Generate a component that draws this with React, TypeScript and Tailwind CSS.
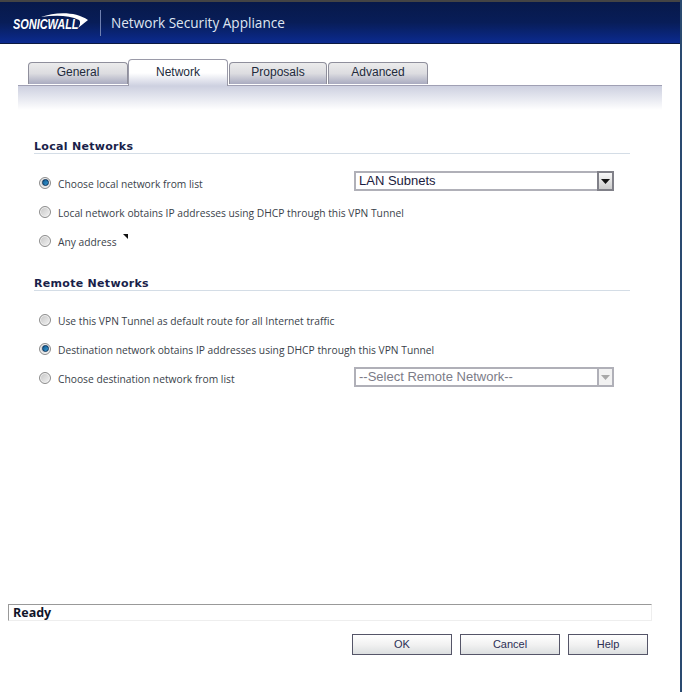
import React from 'react';

const sans = 'font-["Liberation_Sans",Arial,sans-serif]';
const tahoma = 'font-["Open_Sans",sans-serif]';

function Tab({ label, active, width }: { label: string; active?: boolean; width: string }) {
  if (active) {
    return (
      <div className={`${width} h-[27px] -mb-px z-10 rounded-t-[4px] border border-b-0 border-[#9a9aa8] bg-gradient-to-b from-white via-white to-[#cdd0e0] flex items-center justify-center pb-[2px] text-[12px] text-[#222a3c] ${sans}`}>
        {label}
      </div>
    );
  }
  return (
    <div className={`${width} h-[22px] mb-px rounded-t-[4px] border border-b-0 border-[#8f8f9c] bg-gradient-to-b from-[#ececec] via-[#dcdce0] to-[#a9abc0] flex items-center justify-center pb-[3px] text-[12px] text-[#222a3c] ${sans}`}>
      {label}
    </div>
  );
}

function Radio({ checked }: { checked?: boolean }) {
  return (
    <span className="w-[12px] h-[12px] -mt-[2px] shrink-0 rounded-full border border-[#8c8c8c] bg-gradient-to-br from-[#c4c4c4] to-[#f4f4f4] shadow-[inset_0_0_0_1px_#f2f2f2] flex items-center justify-center">
      {checked && <span className="w-[7px] h-[7px] rounded-full border border-[#06305a] bg-gradient-to-br from-[#0e5a94] to-[#3a9ad0]" />}
    </span>
  );
}

function Row({ label, checked, mark }: { label: string; checked?: boolean; mark?: boolean }) {
  return (
    <div className="h-[29px] flex items-center pl-[5px]">
      <Radio checked={checked} />
      <span className={`ml-[7px] mt-[2px] text-[10.25px] text-[#3a3f4a] ${tahoma}`}>{label}</span>
      {mark && (
        <svg width="6" height="6" viewBox="0 0 6 6" className="ml-[6px] -mt-[9px]">
          <path d="M0 0H5V5Z" fill="#111" />
        </svg>
      )}
    </div>
  );
}

function Heading({ children }: { children: string }) {
  return (
    <div className={`h-[17px] pt-[3px] border-b border-[#d4dde6] text-[11px] font-bold tracking-[0.3px] text-[#1a1f4a] leading-[14px] font-["DejaVu_Sans",sans-serif]`}>
      {children}
    </div>
  );
}

function DropBox({ label, disabled }: { label: string; disabled?: boolean }) {
  return (
    <div className={`absolute left-[320px] w-[260px] h-[20px] border-2 border-[#b0b0b8] bg-white flex items-center justify-between pl-[3px] text-[13px] ${sans} ${disabled ? 'top-[3px] text-[#7c7c88]' : 'top-[2px] text-[#1c1c40]'}`}>
      <span>{label}</span>
      <span className={`w-[17px] h-[20px] -mr-[2px] flex items-center justify-center border-2 ${disabled ? 'bg-[#f2f2f2] border-[#b0b0b8]' : 'bg-gradient-to-b from-[#f8f8f8] to-[#cccccc] border-[#808088]'}`}>
        <svg width="9" height="5" viewBox="0 0 9 5">
          <path d="M0 0H9L4.5 5Z" fill={disabled ? '#a8a8a8' : '#111'} />
        </svg>
      </span>
    </div>
  );
}

function Btn({ label, width }: { label: string; width: string }) {
  return (
    <div className={`${width} h-[21px] border border-[#555568] bg-gradient-to-b from-white via-[#f2f2f2] to-[#dcdfe0] flex items-center justify-center text-[11px] text-[#2c2f55] ${sans}`}>
      {label}
    </div>
  );
}

export default function App() {
  return (
    <div className="w-[682px] h-[692px] bg-white flex flex-col border-r-2 border-[#2a4a70] overflow-hidden">
      {/* Header */}
      <div className="h-[44px] shrink-0 border-t-2 border-b border-t-[#444] border-b-[#0c1a40] bg-gradient-to-b from-[#07194a] via-[#081d58] to-[#0b2a90] flex items-center">
        <div className="relative ml-[13px] w-[75px] h-[30px]">
          <span className={`absolute left-0 top-[6px] text-[14px] font-bold italic text-white scale-x-[0.78] origin-left whitespace-nowrap ${sans}`}>SONICWALL</span>
          <svg width="76" height="30" viewBox="0 0 76 30" className="absolute left-0 top-0">
            <path d="M28 9C42 4 62 3 75 12L65 20C67 17 68 14 66 12C56 7 42 7 28 9Z" fill="#fff" />
          </svg>
        </div>
        <div className="ml-[12px] w-px h-[26px] bg-[#6f80b0]" />
        <span className={`ml-[10px] pt-[2px] text-[13.6px] text-[#dfe5f2] ${tahoma}`}>Network Security Appliance</span>
      </div>

      {/* Tabs */}
      <div className="mt-[14px] h-[27px] pl-[28px] flex items-end">
        <Tab label="General" width="w-[100px]" />
        <Tab label="Network" active width="w-[100px]" />
        <Tab label="Proposals" width="w-[98px] ml-px" />
        <Tab label="Advanced" width="w-[100px] ml-px" />
      </div>
      <div className="ml-[18px] w-[644px] h-[25px] border-t border-[#a0a0b4] bg-gradient-to-b from-[#cdd0e0] to-white" />

      {/* Form */}
      <div className="pl-[34px] w-[630px] mt-[27px]">
        <Heading>Local Networks</Heading>
        <div className="mt-[15px]">
          <div className="relative"><Row label="Choose local network from list" checked /><DropBox label="LAN Subnets" /></div>
          <Row label="Local network obtains IP addresses using DHCP through this VPN Tunnel" />
          <Row label="Any address" mark />
        </div>
        <div className="mt-[18px]">
          <Heading>Remote Networks</Heading>
        </div>
        <div className="mt-[15px]">
          <Row label="Use this VPN Tunnel as default route for all Internet traffic" />
          <Row label="Destination network obtains IP addresses using DHCP through this VPN Tunnel" checked />
          <div className="relative"><Row label="Choose destination network from list" /><DropBox label="--Select Remote Network--" disabled /></div>
        </div>
      </div>

      {/* Status */}
      <div className="flex-1" />
      <div className={`ml-[8px] w-[644px] h-[17px] border-t border-l border-t-[#999] border-l-[#999] border-b border-r border-b-[#eee] border-r-[#eee] pl-[4px] text-[12.5px] leading-[15px] font-bold text-[#10152a] font-["Open_Sans",sans-serif]`}>
        Ready
      </div>
      <div className="mt-[13px] mb-[37px] pl-[352px] flex gap-[8px]">
        <Btn label="OK" width="w-[100px]" />
        <Btn label="Cancel" width="w-[100px]" />
        <Btn label="Help" width="w-[80px]" />
      </div>
    </div>
  );
}
